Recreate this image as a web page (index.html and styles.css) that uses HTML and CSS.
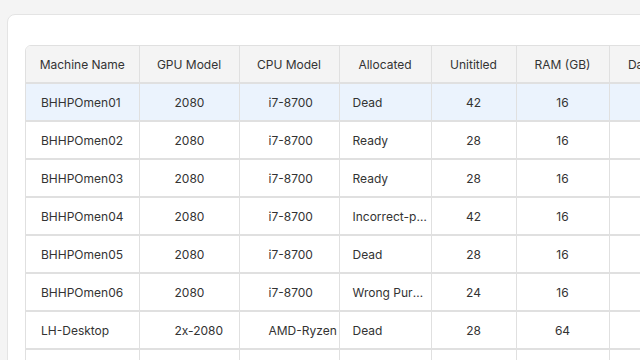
FILE: index.html
```html
<!DOCTYPE html>
<html lang="en">
<head>
    <meta charset="UTF-8">
    <meta name="viewport" content="width=device-width, initial-scale=1.0">
    <title>Machines</title>
    <link rel="stylesheet" href="styles.css">
</head>
<body>
    <div class="card">
        <div class="table-wrap">
            <table class="machines">
                <thead>
                    <tr>
                        <th class="c-name">Machine Name</th>
                        <th class="c-gpu">GPU Model</th>
                        <th class="c-cpu">CPU Model</th>
                        <th class="c-alloc">Allocated</th>
                        <th class="c-unt">Unititled</th>
                        <th class="c-ram">RAM (GB)</th>
                        <th class="c-date">Date</th>
                    </tr>
                </thead>
                <tbody>
                    <tr class="selected">
                        <td class="c-name">BHHPOmen01</td>
                        <td class="c-gpu">2080</td>
                        <td class="c-cpu">i7-8700</td>
                        <td class="c-alloc">Dead</td>
                        <td class="c-unt">42</td>
                        <td class="c-ram">16</td>
                        <td class="c-date"></td>
                    </tr>
                    <tr>
                        <td class="c-name">BHHPOmen02</td>
                        <td class="c-gpu">2080</td>
                        <td class="c-cpu">i7-8700</td>
                        <td class="c-alloc">Ready</td>
                        <td class="c-unt">28</td>
                        <td class="c-ram">16</td>
                        <td class="c-date"></td>
                    </tr>
                    <tr>
                        <td class="c-name">BHHPOmen03</td>
                        <td class="c-gpu">2080</td>
                        <td class="c-cpu">i7-8700</td>
                        <td class="c-alloc">Ready</td>
                        <td class="c-unt">28</td>
                        <td class="c-ram">16</td>
                        <td class="c-date"></td>
                    </tr>
                    <tr>
                        <td class="c-name">BHHPOmen04</td>
                        <td class="c-gpu">2080</td>
                        <td class="c-cpu">i7-8700</td>
                        <td class="c-alloc">Incorrect-partition</td>
                        <td class="c-unt">42</td>
                        <td class="c-ram">16</td>
                        <td class="c-date"></td>
                    </tr>
                    <tr>
                        <td class="c-name">BHHPOmen05</td>
                        <td class="c-gpu">2080</td>
                        <td class="c-cpu">i7-8700</td>
                        <td class="c-alloc">Dead</td>
                        <td class="c-unt">28</td>
                        <td class="c-ram">16</td>
                        <td class="c-date"></td>
                    </tr>
                    <tr>
                        <td class="c-name">BHHPOmen06</td>
                        <td class="c-gpu">2080</td>
                        <td class="c-cpu">i7-8700</td>
                        <td class="c-alloc">Wrong Purpose</td>
                        <td class="c-unt">24</td>
                        <td class="c-ram">16</td>
                        <td class="c-date"></td>
                    </tr>
                    <tr>
                        <td class="c-name">LH-Desktop</td>
                        <td class="c-gpu">2x-2080</td>
                        <td class="c-cpu">AMD-Ryzen</td>
                        <td class="c-alloc">Dead</td>
                        <td class="c-unt">28</td>
                        <td class="c-ram">64</td>
                        <td class="c-date"></td>
                    </tr>
                    <tr>
                        <td class="c-name">LH-Laptop</td>
                        <td class="c-gpu">1060</td>
                        <td class="c-cpu">i7-7700</td>
                        <td class="c-alloc">Ready</td>
                        <td class="c-unt">16</td>
                        <td class="c-ram">16</td>
                        <td class="c-date"></td>
                    </tr>
                </tbody>
            </table>
        </div>
    </div>
</body>
</html>
```

FILE: styles.css
```css
* {
    margin: 0;
    padding: 0;
    box-sizing: border-box;
}

body {
    background: #f4f4f4;
    font-family: 'Inter', 'Noto Sans', sans-serif;
    font-size: 12px;
    color: #333;
    padding: 14px 0 0 7px;
    height: 100vh;
    overflow: hidden;
}

.card {
    width: 720px;
    background: #fff;
    border: 1px solid #e4e4e4;
    border-radius: 8px;
    padding: 30px 17px 40px;
}

.table-wrap {
    display: inline-block;
    border: 1px solid #e0e0e0;
    border-radius: 6px;
    overflow: hidden;
}

.machines {
    width: 647px;
    border-collapse: collapse;
    table-layout: fixed;
}

.machines th,
.machines td {
    height: 38px;
    border-right: 1px solid #e0e0e0;
    border-bottom: 2px solid #e0e0e0;
    white-space: nowrap;
    overflow: hidden;
    text-overflow: ellipsis;
    font-weight: normal;
}

.machines th {
    height: 37px;
    background: #f4f4f4;
    text-align: center;
    padding: 0 4px;
}

.machines td {
    text-align: left;
}

.machines tr.selected td {
    background: #ebf3fd;
}

.c-name { width: 113px; }
.c-gpu { width: 100px; }
.c-cpu { width: 100px; }
.c-alloc { width: 92px; }
.c-unt { width: 85px; }
.c-ram { width: 93px; }
.c-date { width: 64px; }

td.c-name { padding-left: 15px; }
td.c-gpu { padding-left: 35px; }
td.c-cpu { padding-left: 29px; }
td.c-alloc { padding-left: 13px; padding-right: 1px; }
td.c-unt,
td.c-ram { text-align: center; }
```
